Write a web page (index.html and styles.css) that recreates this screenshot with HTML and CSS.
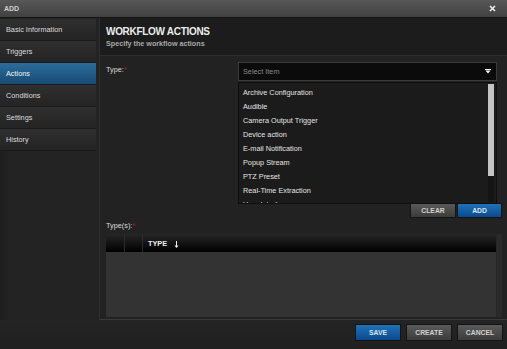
FILE: index.html
```html
<!DOCTYPE html>
<html lang="en">
<head>
    <meta charset="UTF-8">
    <title>Add Workflow</title>
    <link rel="stylesheet" href="styles.css">
</head>
<body>
    <div class="dialog">
        <div class="titlebar">
            <span class="title">ADD</span>
            <svg class="close" width="7" height="7" viewBox="0 0 7 7"><path d="M1 1L6 6M6 1L1 6" stroke="#eee" stroke-width="1.6"/></svg>
        </div>
        <div class="main">
            <ul class="sidebar">
                <li>Basic Information</li>
                <li>Triggers</li>
                <li class="active">Actions</li>
                <li>Conditions</li>
                <li>Settings</li>
                <li>History</li>
            </ul>
            <div class="panel">
                <div class="panel-head">
                    <h1>WORKFLOW ACTIONS</h1>
                    <p>Specify the workflow actions</p>
                </div>
                <div class="panel-body">
                    <div class="type-row">
                        <label class="field-label">Type:<span class="req">*</span></label>
                        <div class="select-wrap">
                            <div class="select">
                                <span class="placeholder">Select Item</span>
                                <svg class="arrow" width="6" height="5" viewBox="0 0 6 5"><path d="M0 0H6V1H0Z M0.5 1.5H5.5L3 4.5Z" fill="#fff"/></svg>
                            </div>
                            <div class="options">
                                <ul>
                                    <li>Archive Configuration</li>
                                    <li>Audible</li>
                                    <li>Camera Output Trigger</li>
                                    <li>Device action</li>
                                    <li>E-mail Notification</li>
                                    <li>Popup Stream</li>
                                    <li>PTZ Preset</li>
                                    <li>Real-Time Extraction</li>
                                    <li>User Interface</li>
                                </ul>
                                <div class="scroll"><div class="thumb"></div></div>
                            </div>
                        </div>
                    </div>
                    <div class="add-row">
                        <button class="btn btn-gray clear-btn">CLEAR</button>
                        <button class="btn btn-blue add-btn">ADD</button>
                    </div>
                    <label class="field-label types-label">Type(s):<span class="req">*</span></label>
                    <div class="grid">
                        <div class="grid-main">
                            <div class="grid-head">
                                <div class="col col-a"></div>
                                <div class="col col-b"></div>
                                <div class="col col-type">TYPE
                                    <svg class="sort" width="5" height="7" viewBox="0 0 5 7"><path d="M2.5 0V6" stroke="#f0f0f0" stroke-width="1"/><path d="M0.5 4.5L2.5 7L4.5 4.5Z" fill="#f0f0f0"/></svg>
                                </div>
                            </div>
                            <div class="grid-body"></div>
                        </div>
                        <div class="grid-scroll"></div>
                    </div>
                </div>
            </div>
        </div>
        <div class="footer">
            <button class="btn btn-blue foot-btn">SAVE</button>
            <button class="btn btn-gray foot-btn">CREATE</button>
            <button class="btn btn-gray foot-btn">CANCEL</button>
        </div>
    </div>
</body>
</html>
```

FILE: styles.css
```css
body {
    margin: 0;
    padding: 0;
    background: #232323;
    font-family: "Liberation Sans", Arial, sans-serif;
    font-size: 7.3px;
    color: #ddd;
}
.dialog {
    width: 507px;
    height: 349px;
    display: flex;
    flex-direction: column;
    background: #232323;
    overflow: hidden;
}
.titlebar {
    height: 17px;
    border-bottom: 1px solid #151515;
    background: linear-gradient(#575757, #414141);
    display: flex;
    align-items: center;
    justify-content: space-between;
    padding: 0 11px 0 4px;
}
.title {
    color: #d0d0d0;
    font-size: 7px;
    font-weight: bold;
}
.main {
    height: 302px;
    display: flex;
}
.sidebar {
    list-style: none;
    margin: 0;
    padding: 1px 0 0 0;
    width: 96px;
    margin-right: 3px;
    background: linear-gradient(90deg, #1e1e1e 0, #232323 10px);
}
.sidebar li {
    height: 21px;
    line-height: 21px;
    padding-left: 6px;
    border-bottom: 1px solid #1a1a1a;
    background: linear-gradient(#2f2f2f, #242424);
    color: #dcdcdc;
}
.sidebar li.active {
    background: linear-gradient(#2b6c9c, #174b73);
    color: #f4f4f4;
}
.panel {
    flex: 1;
    display: flex;
    flex-direction: column;
    border-left: 1px solid #2e2e2e;
    border-bottom: 1px solid #3a3a3a;
    background: #222;
}
.panel-head {
    height: 38px;
    border-bottom: 1px solid #2d2d2d;
    background: #1c1c1c;
    padding-left: 6px;
    box-sizing: border-box;
    padding-top: 8px;
}
.panel-head h1 {
    margin: 0;
    font-size: 10px;
    line-height: 12px;
    letter-spacing: -0.3px;
    color: #ececec;
}
.panel-head p {
    margin: 1px 0 0 0;
    font-size: 7.2px;
    line-height: 10px;
    font-weight: bold;
    color: #a8a8a8;
}
.panel-body {
    flex: 1;
    display: flex;
    flex-direction: column;
    padding: 6px 5px 2px 6px;
}
.type-row {
    display: flex;
    height: 19px;
}
.field-label {
    width: 132px;
    line-height: 16px;
    color: #dcdcdc;
}
.req {
    color: #d01010;
}
.select-wrap {
    position: relative;
    width: 259px;
}
.select {
    height: 19px;
    box-sizing: border-box;
    border: 1px solid #3a3a3a;
    background: #0b0b0b;
    display: flex;
    align-items: center;
    justify-content: space-between;
    padding: 0 5px 0 4px;
}
.placeholder {
    color: #8a8a8a;
}
.options {
    position: absolute;
    top: 20px;
    left: 0;
    width: 259px;
    height: 122px;
    box-sizing: border-box;
    background: #1b1b1b;
    border: 1px solid #0f0f0f;
    display: flex;
    overflow: hidden;
    z-index: 2;
}
.options ul {
    list-style: none;
    margin: 0;
    padding: 3px 0 0 4px;
    flex: 1;
}
.options li {
    line-height: 14px;
    color: #e4e4e4;
}
.scroll {
    width: 6px;
    margin: 1px 2px 1px 0;
    background: #141414;
}
.thumb {
    height: 92px;
    background: #c4c4c4;
}
.add-row {
    margin-top: 122px;
    display: flex;
    justify-content: flex-end;
    gap: 1px;
    height: 15px;
}
.btn {
    font-family: "Liberation Sans", Arial, sans-serif;
    font-weight: bold;
    font-size: 6.8px;
    padding: 0;
    border: 1px solid #141414;
    cursor: pointer;
}
.btn-gray {
    background: linear-gradient(#5a5a5a, #3c3c3c);
    color: #d2d2d2;
}
.btn-blue {
    background: linear-gradient(#1f72b8, #0b4a8c);
    color: #d8e6f4;
}
.clear-btn {
    width: 46px;
}
.add-btn {
    width: 45px;
}
.types-label {
    margin: 3px 0 3px 0;
    line-height: 10px;
}
.grid {
    flex: 1;
    display: flex;
}
.grid-main {
    flex: 1;
    display: flex;
    flex-direction: column;
}
.grid-head {
    height: 18px;
    display: flex;
    background: linear-gradient(#262626, #000);
}
.col {
    border-right: 1px solid #2c2c2c;
}
.col-a {
    width: 18px;
}
.col-b {
    width: 17px;
}
.col-type {
    flex: 1;
    border-right: none;
    padding-left: 5px;
    display: flex;
    align-items: center;
    font-weight: bold;
    color: #f0f0f0;
}
.sort {
    margin-left: 7px;
    margin-top: 2px;
}
.grid-body {
    flex: 1;
    background: #333;
}
.grid-scroll {
    width: 5px;
    background: #2a2a2a;
    border-left: 1px solid #262626;
}
.footer {
    flex: 1;
    display: flex;
    justify-content: flex-end;
    align-items: flex-start;
    gap: 5px;
    padding: 4px 4px 0 0;
    background: linear-gradient(#242424, #202020);
}
.foot-btn {
    width: 46px;
    height: 17px;
}
```
